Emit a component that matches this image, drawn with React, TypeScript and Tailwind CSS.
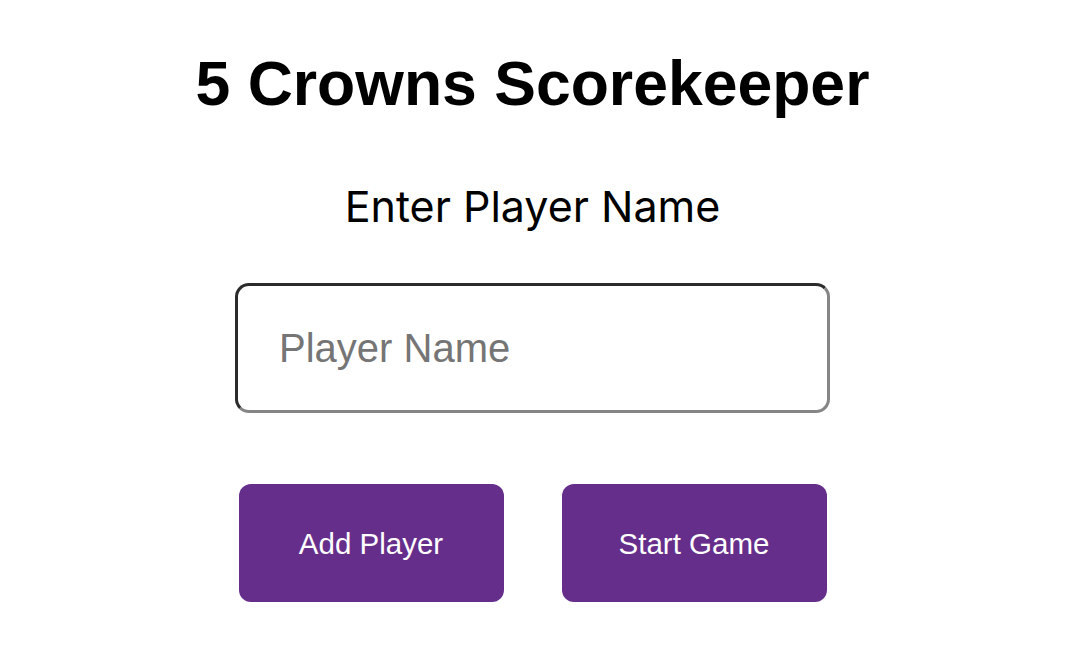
import React, { useState } from 'react'

const arial = "font-['Liberation_Sans',Arial,sans-serif]"

export default function App() {
  const [name, setName] = useState('')
  const [players, setPlayers] = useState<string[]>([])

  const addPlayer = () => {
    if (!name.trim()) return
    setPlayers([...players, name.trim()])
    setName('')
  }

  return (
    <div className="min-h-[649px] w-full bg-white pr-[17px]">
      <div className="flex flex-col items-center pt-[47px]">
        <h1 className={`${arial} text-[62.5px] leading-[72px] font-bold text-black`}>
          5 Crowns Scorekeeper
        </h1>
        <h2 className="mt-[61px] font-['Inter',sans-serif] text-[43px] leading-[52px] font-normal text-black">
          Enter Player Name
        </h2>
        <input
          value={name}
          onChange={(e) => setName(e.target.value)}
          placeholder="Player Name"
          className={`${arial} mt-[51px] h-[130px] w-[595px] rounded-[14px] border-[3px] border-t-[#2b2b2b] border-l-[#2b2b2b] border-r-[#858585] border-b-[#858585] bg-white pl-[41px] text-[40px] text-black outline-none placeholder:text-[#757575]`}
        />
        <div className="mt-[71px] flex gap-[58px]">
          <button
            onClick={addPlayer}
            className={`${arial} h-[118px] w-[265px] rounded-[12px] bg-[#662e8b] pt-[3px] text-[29.5px] text-white`}
          >
            Add Player
          </button>
          <button
            className={`${arial} h-[118px] w-[265px] rounded-[12px] bg-[#662e8b] pt-[3px] text-[29.5px] text-white`}
          >
            Start Game
          </button>
        </div>
      </div>
    </div>
  )
}
